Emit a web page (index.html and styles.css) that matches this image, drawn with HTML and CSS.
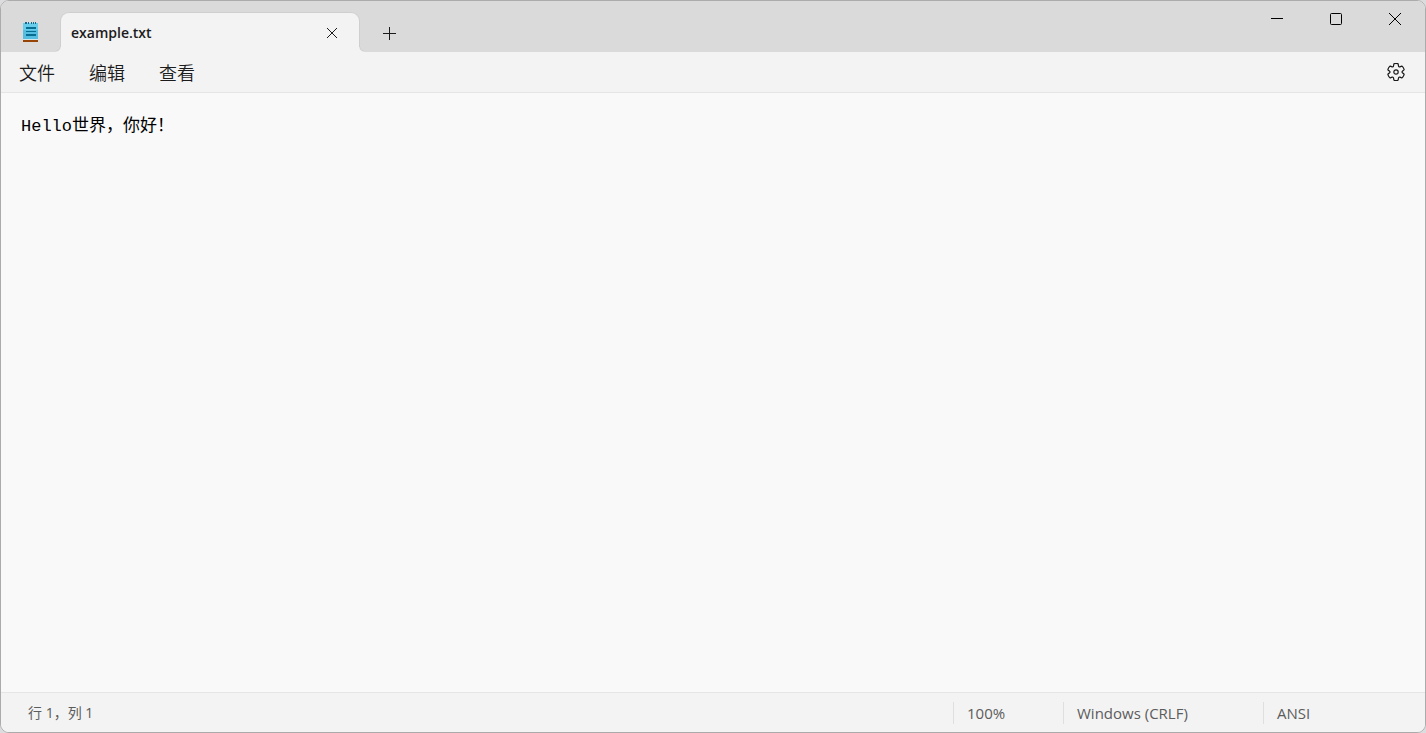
FILE: index.html
```html
<!DOCTYPE html>
<html lang="zh-CN">

<head>
    <meta charset="utf-8">
    <meta name="viewport" content="width=device-width, initial-scale=1.0">
    <title>example.txt</title>
    <link rel="stylesheet" href="styles.css">
</head>

<body>
    <div class="window">
        <header class="titlebar">
            <svg class="app-icon" width="16" height="20" viewBox="0 0 16 20" shape-rendering="crispEdges">
                <rect x="0" y="1" width="15" height="17" fill="#54bde0" />
                <rect x="0" y="1" width="15" height="7" fill="#68cdea" />
                <path d="M2 0h2v2H2zM5 0h1v2H5zM8 0h1v2H8zM10 0h1v2h-1zM12 0h1v2h-1z" fill="#17698c" />
                <path d="M3 5h10v2H3zM3 9h10v1H3zM3 12h10v2H3z" fill="#086d92" />
                <rect x="0" y="17" width="15" height="1" fill="#d3e6ec" />
                <rect x="0" y="18" width="15" height="2" fill="#974407" />
            </svg>
            <div class="tab">
                <span class="tab-title">example.txt</span>
                <button class="tab-close" aria-label="关闭标签页">
                    <svg width="12" height="12" viewBox="0 0 12 12"><path d="M1 1l10 10M11 1L1 11" /></svg>
                </button>
            </div>
            <button class="tab-add" aria-label="新建标签页">
                <svg width="13" height="13" viewBox="0 0 13 13"><path d="M6.5 0v13M0 6.5h13" /></svg>
            </button>
            <div class="controls">
                <button aria-label="最小化">
                    <svg width="14" height="14" viewBox="0 0 14 14"><path d="M1 6.5h12" /></svg>
                </button>
                <button aria-label="最大化">
                    <svg width="14" height="14" viewBox="0 0 14 14"><rect x="1.5" y="1.5" width="11" height="11" rx="1" /></svg>
                </button>
                <button aria-label="关闭">
                    <svg width="14" height="14" viewBox="0 0 14 14"><path d="M1 1l12 12M13 1L1 13" /></svg>
                </button>
            </div>
        </header>

        <nav class="menubar">
            <button>文件</button>
            <button>编辑</button>
            <button>查看</button>
            <button class="settings" aria-label="设置">
                <svg width="20" height="20" viewBox="0 0 20 20">
                    <path d="M1.91 7.38A8.5 8.5 0 0 1 3.7 4.3a.5.5 0 0 1 .54-.13l1.92.68a1 1 0 0 0 1.32-.76l.36-2a.5.5 0 0 1 .4-.4 8.53 8.53 0 0 1 3.55 0c.2.04.35.2.38.4l.37 2a1 1 0 0 0 1.32.76l1.92-.68a.5.5 0 0 1 .54.13 8.5 8.5 0 0 1 1.78 3.08c.06.2 0 .4-.15.54l-1.56 1.32a1 1 0 0 0 0 1.52l1.56 1.32a.5.5 0 0 1 .15.54 8.5 8.5 0 0 1-1.78 3.08.5.5 0 0 1-.54.13l-1.92-.68a1 1 0 0 0-1.32.76l-.37 2a.5.5 0 0 1-.38.4 8.53 8.53 0 0 1-3.56 0 .5.5 0 0 1-.39-.4l-.36-2a1 1 0 0 0-1.32-.76l-1.92.68a.5.5 0 0 1-.54-.13 8.5 8.5 0 0 1-1.78-3.08.5.5 0 0 1 .15-.54l1.56-1.32a1 1 0 0 0 0-1.52L2.06 7.92a.5.5 0 0 1-.15-.54Z" />
                    <circle cx="10" cy="10" r="2.2" />
                </svg>
            </button>
        </nav>

        <textarea class="editor" aria-label="文本编辑器" spellcheck="false">Hello世界，你好！</textarea>

        <footer class="statusbar">
            <span class="position">行 1，列 1</span>
            <span class="status zoom">100%</span>
            <span class="status eol">Windows (CRLF)</span>
            <span class="status encoding">ANSI</span>
        </footer>
    </div>
</body>

</html>
```
FILE: styles.css
```css
* {
    margin: 0;
    padding: 0;
    box-sizing: border-box;
}

body {
    height: 100vh;
    background: #dcdcde;
    font-family: "Open Sans", "Noto Sans CJK SC", sans-serif;
    color: #1b1b1b;
}

button {
    border: none;
    background: none;
    color: inherit;
    font-family: inherit;
}

button svg {
    display: block;
    margin: auto;
    fill: none;
    stroke: #1b1b1b;
}

.window {
    height: 100%;
    display: flex;
    flex-direction: column;
    border: 1px solid #ababab;
    border-radius: 9px;
    overflow: hidden;
    background: #f9f9f9;
}

.titlebar {
    display: flex;
    height: 51px;
    background: #dadada;
}

.app-icon {
    margin: 21px 21px 0 22px;
}

.tab {
    position: relative;
    display: flex;
    align-items: center;
    justify-content: space-between;
    width: 300px;
    height: 40px;
    margin-top: 11px;
    padding: 0 21px 0 10px;
    background: #f3f3f3;
    border: 1px solid #cfcfcf;
    border-bottom: none;
    border-radius: 9px 9px 0 0;
}

/* small outward curves where the tab meets the menu bar */
.tab::before,
.tab::after {
    content: "";
    position: absolute;
    bottom: 0;
    width: 5px;
    height: 5px;
}

.tab::before {
    right: 100%;
    background: radial-gradient(circle at 0 0, #dadada 3px, #cfcfcf 4px, #f3f3f3 5px);
}

.tab::after {
    left: 100%;
    background: radial-gradient(circle at 100% 0, #dadada 3px, #cfcfcf 4px, #f3f3f3 5px);
}

.tab-title {
    font-size: 14px;
    font-weight: 600;
    line-height: 20px;
}

.tab-close {
    width: 12px;
    height: 12px;
}

.tab-add {
    width: 36px;
    height: 36px;
    margin: 14px 0 0 11px;
}

.controls {
    display: flex;
    margin-left: auto;
    padding-right: 1px;
}

.controls button {
    width: 59px;
    height: 36px;
}

.controls svg {
    stroke: #000;
}

.menubar {
    display: flex;
    height: 41px;
    padding-left: 1px;
    background: #f3f3f3;
    border-bottom: 1px solid #e5e5e5;
}

.menubar button {
    width: 70px;
    font-size: 18px;
    font-weight: 350;
    line-height: 42px;
}

.menubar .settings {
    width: 58px;
    margin-left: auto;
}

.settings svg {
    stroke-width: 1.2;
}

.editor {
    flex: 1;
    width: 100%;
    padding: 22px 20px;
    border: none;
    outline: none;
    resize: none;
    background: #f9f9f9;
    color: #000;
    font-family: "Liberation Mono", "Noto Sans CJK SC", monospace;
    font-size: 17px;
    line-height: 24px;
}

.statusbar {
    display: flex;
    align-items: center;
    height: 40px;
    background: #f3f3f3;
    border-top: 1px solid #e5e5e5;
    color: #5c5c5c;
    font-size: 15px;
    line-height: 22px;
}

.position {
    margin-right: auto;
    padding-left: 27px;
    font-size: 14px;
}

.status {
    padding-left: 13px;
    border-left: 1px solid #dfdfdf;
}

.zoom {
    width: 110px;
}

.eol {
    width: 200px;
}

.encoding {
    width: 162px;
}
```
